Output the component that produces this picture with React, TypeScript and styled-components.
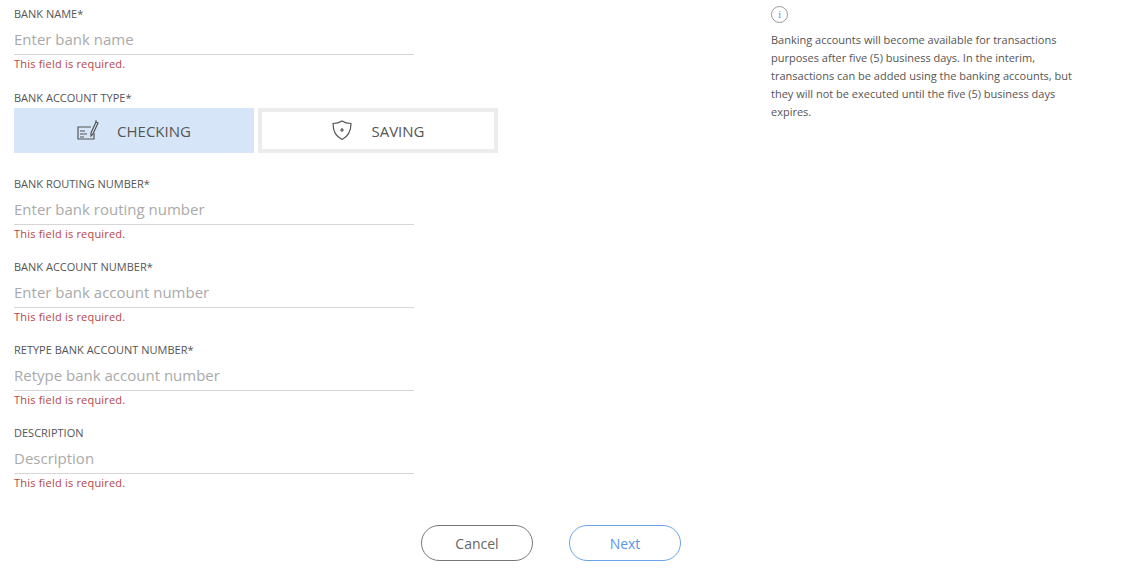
import React from "react";
import styled, { createGlobalStyle } from "styled-components";

const Global = createGlobalStyle`
  body { margin: 0; font-family: "Open Sans", Lato, sans-serif; background: #fff; }
  * { box-sizing: border-box; }
`;

const Page = styled.div`
  display: flex;
  padding: 0 0 0 14px;
`;
const FormCol = styled.div`
  width: 757px;
  display: flex;
  flex-direction: column;
  padding-top: 7px;
`;
const Side = styled.div`
  width: 320px;
  padding-top: 6px;
`;
const Block = styled.div<{ $gap: number }>`
  display: flex;
  flex-direction: column;
  margin-bottom: ${(p) => p.$gap}px;
`;
const Label = styled.div`
  font-size: 11px;
  line-height: 14px;
  color: #555;
  text-transform: uppercase;
`;
const Input = styled.input`
  width: 400px;
  height: 34px;
  border: none;
  border-bottom: 1px solid #d6d6d6;
  padding: 3px 0 0;
  font-family: inherit;
  font-size: 15px;
  color: #333;
  outline: none;
  &::placeholder { color: #aaa; }
`;
const Error = styled.div`
  margin-top: 3px;
  font-size: 11px;
  line-height: 12px;
  letter-spacing: 0.2px;
  color: #b64646;
`;
const Segments = styled.div`
  display: flex;
  gap: 4px;
  margin-top: 3px;
`;
const Seg = styled.button<{ $active?: boolean }>`
  width: 240px;
  flex: none;
  height: 45px;
  border: ${(p) => (p.$active ? "none" : "4px solid #ececec")};
  background: ${(p) => (p.$active ? "#d6e5f7" : "#fff")};
  display: flex;
  align-items: center;
  justify-content: center;
  gap: 18px;
  font-family: inherit;
  font-size: 15px;
  color: #555;
  cursor: pointer;
`;
const InfoIcon = styled.div`
  width: 17px;
  height: 17px;
  border-radius: 50%;
  border: 1px solid #999;
  color: #6a9be0;
  font-family: "DejaVu Serif", serif;
  font-size: 10px;
  line-height: 15px;
  text-align: center;
`;
const Note = styled.p`
  margin: 8px 0 0 0;
  font-size: 11px;
  line-height: 18px;
  color: #555;
`;
const Footer = styled.div`
  width: 1074px;
  display: flex;
  justify-content: center;
  gap: 36px;
  margin-top: 36px;
`;
const Btn = styled.button<{ $primary?: boolean }>`
  width: 112px;
  height: 36px;
  border-radius: 18px;
  background: #fff;
  border: 1px solid ${(p) => (p.$primary ? "#6ba3ea" : "#777")};
  color: ${(p) => (p.$primary ? "#5b95e6" : "#666")};
  font-family: inherit;
  font-size: 14px;
  cursor: pointer;
`;

const Field = ({ label, ph, gap = 20 }: { label: string; ph: string; gap?: number }) => (
  <Block $gap={gap}>
    <Label>{label}</Label>
    <Input placeholder={ph} />
    <Error>This field is required.</Error>
  </Block>
);

const CheckIcon = () => (
  <svg width="22" height="22" viewBox="0 0 22 22" fill="none" stroke="#555" strokeWidth="1.2">
    <path d="M14 7H1v12h16v-6" />
    <path d="M3 11h5M3 14h7M3 17h4" />
    <path d="M19 2l2 1-5 11-2 2 0-3z" />
    <path d="M18.5 1.5l1-1" />
  </svg>
);
const ShieldIcon = () => (
  <svg width="22" height="22" viewBox="0 0 22 22" fill="none" stroke="#555" strokeWidth="1.2">
    <path d="M11 1C8 3 5 3.5 2 3.5c0 8 3 13 9 16 6-3 9-8 9-16-3 0-6-.5-9-2.5z" />
    <path d="M11 8v4M9 10h4" />
  </svg>
);

export default function App() {
  return (
    <Page>
      <Global />
      <FormCol>
        <Field label="Bank Name*" ph="Enter bank name" gap={21} />
        <Block $gap={24}>
          <Label>Bank Account Type*</Label>
          <Segments>
            <Seg $active><CheckIcon />CHECKING</Seg>
            <Seg><ShieldIcon />SAVING</Seg>
          </Segments>
        </Block>
        <Field label="Bank Routing Number*" ph="Enter bank routing number" />
        <Field label="Bank Account Number*" ph="Enter bank account number" />
        <Field label="Retype Bank Account Number*" ph="Retype bank account number" />
        <Field label="Description" ph="Description" gap={0} />
        <Footer>
          <Btn>Cancel</Btn>
          <Btn $primary>Next</Btn>
        </Footer>
      </FormCol>
      <Side>
        <InfoIcon>i</InfoIcon>
        <Note>
          Banking accounts will become available for transactions purposes after five (5) business days. In the interim,
          transactions can be added using the banking accounts, but they will not be executed until the five (5) business
          days expires.
        </Note>
      </Side>
    </Page>
  );
}
